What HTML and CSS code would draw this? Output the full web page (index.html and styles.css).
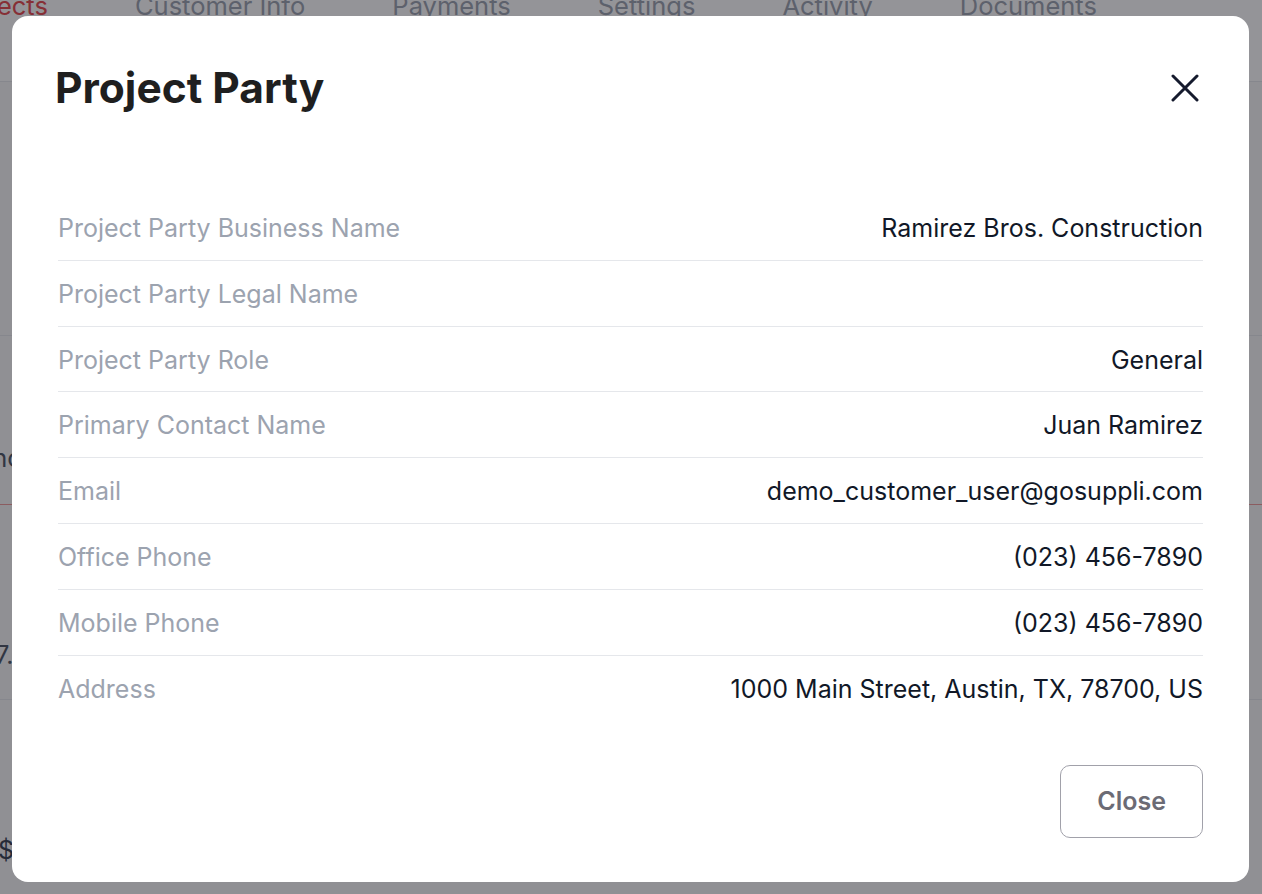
FILE: index.html
```html
<!DOCTYPE html>
<html>

<head>
    <meta charset="UTF-8">
    <meta name="viewport" content="width=device-width, initial-scale=1.0">
    <title>Project Party</title>

    <link rel="stylesheet" href="styles.css">
</head>

<body>
    <div class="page">
        <div class="tabs">
            <div class="tab tab-active">Projects</div>
            <div class="tab">Customer Info</div>
            <div class="tab">Payments</div>
            <div class="tab">Settings</div>
            <div class="tab">Activity</div>
            <div class="tab">Documents</div>
        </div>

        <div class="content">
            <div class="content-row content-row-top"></div>
            <div class="content-row content-row-red"><span class="cut-balance">Balance</span></div>
            <div class="content-row content-row-amount"><span class="cut-amount">$17.</span></div>
            <div class="content-row content-row-plain"><span class="cut-dollar">$</span></div>
        </div>
    </div>

    <div class="overlay">
        <div class="modal">
            <div class="modal-header">
                <h1 class="modal-title">Project Party</h1>
                <div class="modal-x">
                    <svg xmlns="http://www.w3.org/2000/svg" width="28" height="28" viewBox="0 0 28 28">
                        <path d="M2 2L26 26M26 2L2 26" />
                    </svg>
                </div>
            </div>

            <div class="details">
                <div class="detail-row">
                    <div class="detail-label">Project Party Business Name</div>
                    <div class="detail-value">Ramirez Bros. Construction</div>
                </div>
                <div class="detail-row">
                    <div class="detail-label">Project Party Legal Name</div>
                    <div class="detail-value"></div>
                </div>
                <div class="detail-row">
                    <div class="detail-label">Project Party Role</div>
                    <div class="detail-value">General</div>
                </div>
                <div class="detail-row">
                    <div class="detail-label">Primary Contact Name</div>
                    <div class="detail-value">Juan Ramirez</div>
                </div>
                <div class="detail-row">
                    <div class="detail-label">Email</div>
                    <div class="detail-value">demo_customer_user@gosuppli.com</div>
                </div>
                <div class="detail-row">
                    <div class="detail-label">Office Phone</div>
                    <div class="detail-value">(023) 456-7890</div>
                </div>
                <div class="detail-row">
                    <div class="detail-label">Mobile Phone</div>
                    <div class="detail-value">(023) 456-7890</div>
                </div>
                <div class="detail-row">
                    <div class="detail-label">Address</div>
                    <div class="detail-value">1000 Main Street, Austin, TX, 78700, US</div>
                </div>
            </div>

            <div class="modal-footer">
                <div class="close-button">Close</div>
            </div>
        </div>
    </div>
</body>

</html>
```

FILE: styles.css
```css
* { padding: 0px; margin: 0px; box-sizing: border-box; font-family: Inter, "Noto Sans", sans-serif; }

body { background-color: #ffffff; overflow: hidden; }

/* page behind the dialog */
.page { height: 100vh; overflow: hidden; }

.tabs { display: flex; gap: 87px; height: 91px; margin-top: -9px; margin-left: -50px; border-bottom: 1px solid #e5e7eb; }
.tab { font-size: 25.5px; line-height: 30px; color: #9ca3af; white-space: nowrap; }
.tab-active { color: #e5484d; }

.content { background-color: #f7f7f8; }
.content-row { font-size: 25px; line-height: 30px; color: #4b5563; border-bottom: 1px solid #e5e7eb; white-space: nowrap; }
.content-row-top { height: 254px; }
.content-row-red { height: 169px; padding-top: 107px; border-bottom: 1px solid #ef9a9a; }
.content-row-amount { height: 195px; padding-top: 135px; }
.content-row-plain { height: 200px; padding-top: 135px; border-bottom: none; color: #374151; }

.cut-balance { display: inline-block; margin-left: -58px; }
.cut-amount { display: inline-block; margin-left: -31px; }
.cut-dollar { display: inline-block; margin-left: -2px; }

/* dialog */
.overlay { position: fixed; inset: 0; background-color: rgba(17, 17, 26, 0.45); padding: 16px 13px 12px 12px; }

.modal { background-color: #ffffff; border-radius: 16px; padding: 48px 46px 44px 46px; }

.modal-header { display: flex; justify-content: space-between; align-items: center; padding-right: 4px; }
.modal-title { font-size: 42.5px; line-height: 48px; font-weight: 700; color: #1f1f1f; margin-left: -3px; }
.modal-x { width: 28px; height: 28px; }
.modal-x svg { display: block; fill: none; stroke: #151a2d; stroke-width: 3; stroke-linecap: round; }

.details { margin-top: 83px; }
.detail-row { display: flex; justify-content: space-between; gap: 24px; padding: 19px 0 17px 0; border-bottom: 1px solid #e5e7eb; font-size: 25px; line-height: 28.8px; }
.detail-row:last-child { border-bottom: none; }
.detail-label { color: #9ca3af; }
.detail-value { color: #111827; text-align: right; }

.modal-footer { display: flex; justify-content: flex-end; margin-top: 45px; }
.close-button { padding: 21px 36px; border: 1px solid #a1a1aa; border-radius: 10px; font-size: 25px; line-height: 29px; font-weight: 600; color: #6b6b75; }
```
